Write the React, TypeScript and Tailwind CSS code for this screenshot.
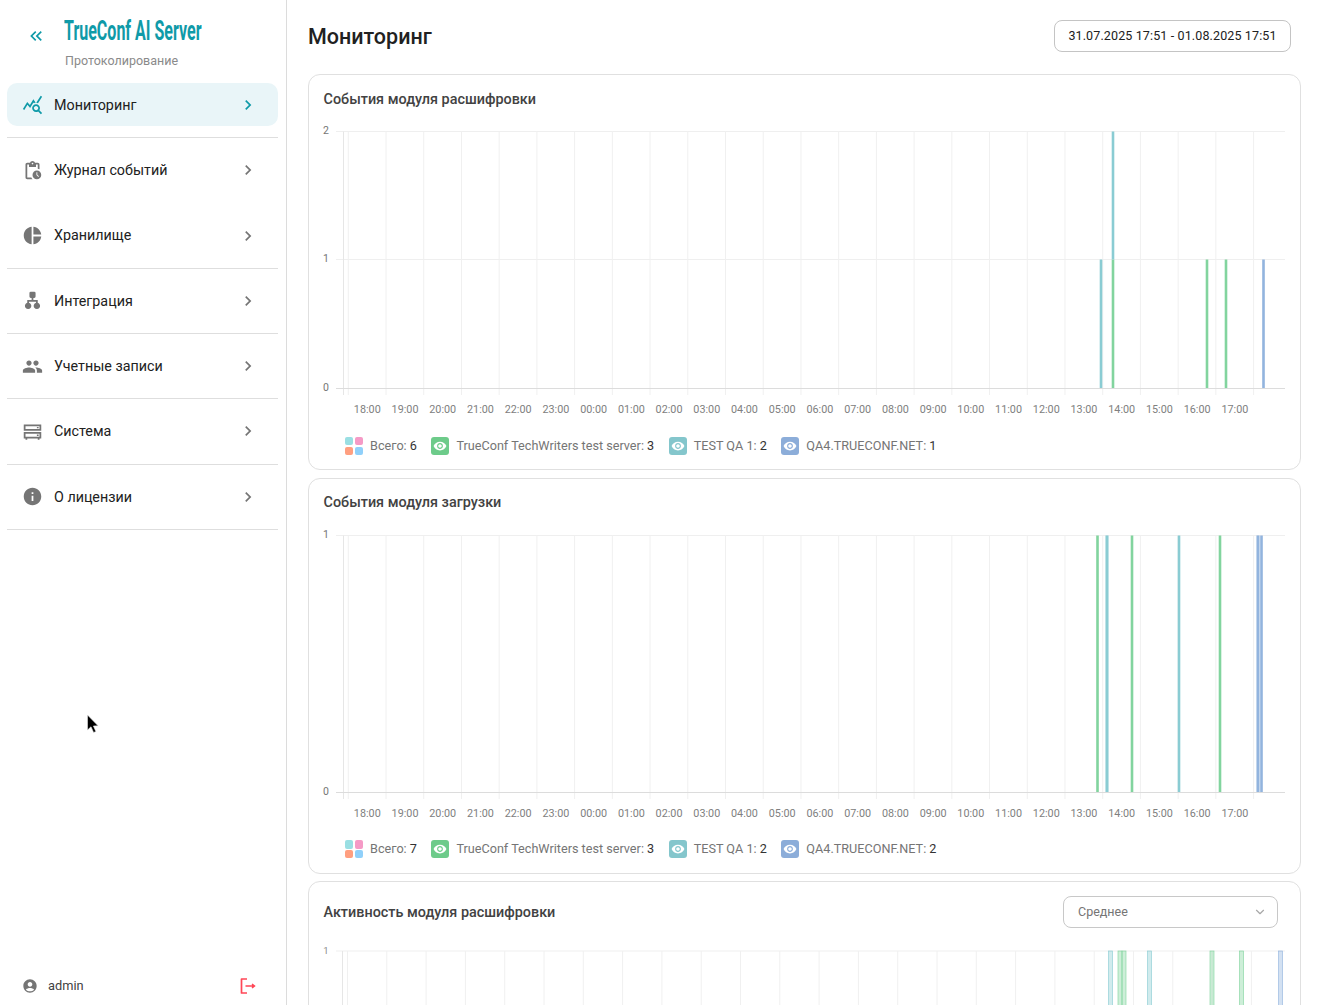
import { ChevronDown } from "lucide-react";

const ICONS = {
  monitor:
    "M19.88 18.47c.44-.7.7-1.51.7-2.39 0-2.49-2.01-4.5-4.5-4.5s-4.5 2.01-4.5 4.5 2.01 4.5 4.49 4.5c.88 0 1.7-.26 2.39-.7L21.58 23 23 21.58l-3.12-3.11zm-3.8.11c-1.38 0-2.5-1.12-2.5-2.5s1.12-2.5 2.5-2.5 2.5 1.12 2.5 2.5-1.12 2.5-2.5 2.5zm-.36-8.5c-.74.02-1.45.18-2.1.45l-.55-.83-3.8 6.18-3.01-3.52-3.63 5.81L1 17l5-8 3 3.5L13 6l2.72 4.08zm2.59.5c-.64-.28-1.33-.45-2.05-.49L21.38 2 23 3.18l-4.69 7.4z",
  journal:
    "M17 12c-2.76 0-5 2.24-5 5s2.24 5 5 5 5-2.24 5-5-2.24-5-5-5zm1.65 7.35L16.5 17.2V14h1v2.79l1.85 1.85-.7.71zM18 3h-3.18C14.4 1.84 13.3 1 12 1s-2.4.84-2.82 2H6c-1.1 0-2 .9-2 2v15c0 1.1.9 2 2 2h6.11c-.59-.57-1.07-1.25-1.42-2H6V5h2v3h8V5h2v5.08c.71.1 1.38.31 2 .6V5c0-1.1-.9-2-2-2zm-6 2c-.55 0-1-.45-1-1s.45-1 1-1 1 .45 1 1-.45 1-1 1z",
  storage:
    "M11 2v20c-5.07-.5-9-4.79-9-10s3.93-9.5 9-10zm2.03 0v8.99H22c-.47-4.74-4.24-8.52-8.97-8.99zm0 11.01V22c4.74-.47 8.5-4.25 8.97-8.99h-8.97z",
  integration:
    "M10 2h4a1.500 1.500 0 0 1 1.500 1.500v4A1.500 1.500 0 0 1 14 9h-1v2.500h5v3.200a3.600 3.600 0 1 1-2 0v-1.200H8v1.200a3.600 3.600 0 1 1-2 0v-3.200h5V9h-1a1.500 1.500 0 0 1-1.500-1.500v-4A1.500 1.500 0 0 1 10 2z",
  users:
    "M16 11c1.66 0 2.99-1.34 2.99-3S17.66 5 16 5c-1.66 0-3 1.34-3 3s1.34 3 3 3zm-8 0c1.66 0 2.99-1.34 2.99-3S9.66 5 8 5C6.34 5 5 6.34 5 8s1.34 3 3 3zm0 2c-2.33 0-7 1.17-7 3.5V19h14v-2.5c0-2.33-4.67-3.5-7-3.5zm8 0c-.29 0-.62.02-.97.05 1.16.84 1.97 1.97 1.97 3.45V19h6v-2.5c0-2.33-4.67-3.5-7-3.5z",
  system:
    "M2 4h20v7H2V4zm2 2v3h16V6H4zm13 .8h2v1.400h-2V6.800zM2 12.500h20V20h-2v1.500h-2V20H6v1.500H4V20H2v-7.500zm2 2V18h16v-3.500H4zm13 1h2V17h-2v-1.500z",
  info: "M12 2C6.48 2 2 6.48 2 12s4.48 10 10 10 10-4.48 10-10S17.52 2 12 2zm1 15h-2v-6h2v6zm0-8h-2V7h2v2z",
  account:
    "M12 2C6.48 2 2 6.48 2 12s4.48 10 10 10 10-4.48 10-10S17.52 2 12 2zm0 4c1.93 0 3.5 1.57 3.5 3.5S13.93 13 12 13s-3.5-1.57-3.5-3.5S10.07 6 12 6zm0 14c-2.03 0-4.43-.82-6.14-2.88C7.55 15.8 9.68 15 12 15s4.45.8 6.14 2.12C16.43 19.18 14.03 20 12 20z",
  eye: "M12 4.500C7 4.500 2.730 7.610 1 12c1.730 4.390 6 7.500 11 7.500s9.270-3.110 11-7.500c-1.730-4.390-6-7.500-11-7.500zM12 17c-2.760 0-5-2.240-5-5s2.240-5 5-5 5 2.240 5 5-2.240 5-5 5zm0-8c-1.660 0-3 1.340-3 3s1.340 3 3 3 3-1.340 3-3-1.340-3-3-3z",
};

const GREEN = "#82d49e";
const TEAL = "#8accd3";
const BLUE = "#92b4de";

const NAV = [
  { label: "Мониторинг", icon: ICONS.monitor, active: true },
  { label: "Журнал событий", icon: ICONS.journal, noLine: true },
  { label: "Хранилище", icon: ICONS.storage },
  { label: "Интеграция", icon: ICONS.integration },
  { label: "Учетные записи", icon: ICONS.users },
  { label: "Система", icon: ICONS.system },
  { label: "О лицензии", icon: ICONS.info },
];

const HOURS = Array.from({ length: 24 }, (_, i) => `${String((18 + i) % 24).padStart(2, "0")}:00`);

function Icon({ d, className }: { d: string; className: string }) {
  return (
    <svg viewBox="0 0 24 24" className={className} fill="currentColor">
      <path d={d} />
    </svg>
  );
}

function Sidebar() {
  return (
    <aside className="flex h-full w-[287px] shrink-0 flex-col border-r border-[#dcdcdc]">
      <div className="flex h-[72px] shrink-0 pl-[26px]">
        <svg viewBox="0 0 24 24" className="mt-[26px] h-[20px] w-[20px] text-[#0f9aa8]" fill="currentColor">
          <path d="M17.590 18 19 16.590 14.420 12 19 7.410 17.590 6l-6 6zM11 18l1.410-1.410L7.830 12l4.580-4.590L11 6l-6 6z" />
        </svg>
        <div className="ml-[18px] flex flex-col">
          <div className="mt-[16px] h-[30px] w-[138px] origin-left scale-x-[0.572] whitespace-nowrap text-[28px] leading-[30px] font-bold text-[#0f9aa8]">
            TrueConf AI Server
          </div>
          <div className="mt-[7px] pl-[1px] text-[12.500px] leading-[16px] whitespace-nowrap text-[#8a8a8a]">
            Протоколирование
          </div>
        </div>
      </div>
      <nav className="flex flex-col pt-[0.700px] pr-[8px] pl-[7px]">
        {NAV.map((item) => (
          <div
            key={item.label}
            className={`flex h-[65.33px] items-center border-b ${item.noLine ? "border-transparent" : "border-[#dedede]"}`}
          >
            <div
              className={`flex h-[43px] w-full items-center rounded-[10px] pr-[20px] pl-[15px] ${item.active ? "bg-[#e9f5f8]" : ""}`}
            >
              <Icon
                d={item.icon}
                className={`h-[21px] w-[21px] ${item.active ? "text-[#0f9aa8]" : "text-[#757575]"}`}
              />
              <span className="ml-[11px] flex-1 pt-[1px] text-[14.300px] text-[#212121]">{item.label}</span>
              <Icon
                d="M10 6 8.590 7.410 13.170 12l-4.580 4.590L10 18l6-6z"
                className={`h-[20px] w-[20px] ${item.active ? "text-[#0f9aa8]" : "text-[#757575]"}`}
              />
            </div>
          </div>
        ))}
      </nav>
      <div className="mt-auto flex h-[38px] items-center pr-[29px] pl-[22px]">
        <Icon d={ICONS.account} className="h-[16px] w-[16px] text-[#757575]" />
        <span className="ml-[10px] flex-1 text-[12.800px] text-[#424242]">admin</span>
        <svg viewBox="0 0 18 18" className="h-[18px] w-[18px]" fill="none" stroke="#ff4757" strokeWidth="1.700">
          <path d="M8 2H2.500v14H8" strokeLinejoin="round" />
          <path d="M6.500 9H15M13 7l2.500 2-2.500 2" fill="#ff4757" strokeWidth="1.500" />
        </svg>
      </div>
    </aside>
  );
}

type Bar = { x: number; y1: number; y2: number; color: string; w?: number; halo?: boolean };

function Chart({ yLabels, bars }: { yLabels: { t: string; y: number; line: number }[]; bars: Bar[] }) {
  const ticks = HOURS.concat("").map((_, i) => 348.300 + i * 37.72);
  return (
    <svg viewBox="309 0 991 300" className="block h-[300px] w-full">
      {yLabels.map((l) => (
        <text key={l.t} x={326} y={l.y + 4} textAnchor="middle" fontSize="10.500" fill="#757575">
          {l.t}
        </text>
      ))}
      {yLabels.slice(0, -1).map((l) => (
        <line key={l.t} x1={336} x2={1285} y1={l.line} y2={l.line} stroke="#efefef" />
      ))}
      <line x1={343.500} x2={343.500} y1={6.500} y2={270} stroke="#e6e6e6" />
      {ticks.map((x) => (
        <line key={x} x1={x} x2={x} y1={6.500} y2={270} stroke="#f0f0f0" />
      ))}
      <line x1={336} x2={1285} y1={263.500} y2={263.500} stroke="#dcdcdc" />
      {bars.map((b, i) => (
        <g key={i}>
          {b.halo && <rect x={b.x - 2} y={b.y1} width={4} height={b.y2 - b.y1} fill={b.color} opacity={0.35} />}
          <rect x={b.x - (b.w ?? 2.600) / 2} y={b.y1} width={b.w ?? 2.600} height={b.y2 - b.y1} fill={b.color} />
        </g>
      ))}
      {HOURS.map((h, i) => (
        <text key={h} x={367.300 + i * 37.72} y={288} textAnchor="middle" fontSize="10.800" fill="#808080">
          {h}
        </text>
      ))}
    </svg>
  );
}

function ActivityChart() {
  const ticks = Array.from({ length: 24 }, (_, i) => 347.500 + i * 39.3);
  const bars = [
    { x: 1110.500, c: TEAL },
    { x: 1120, c: GREEN },
    { x: 1124, c: GREEN },
    { x: 1149.500, c: TEAL },
    { x: 1212, c: GREEN },
    { x: 1241.500, c: GREEN },
    { x: 1280.500, c: BLUE },
  ];
  return (
    <svg viewBox="309 0 991 300" className="block h-[300px] w-full">
      <text x={326} y={9.500} textAnchor="middle" fontSize="9.500" fill="#8a8a8a">
        1
      </text>
      <line x1={336} x2={1285} y1={7} y2={7} stroke="#efefef" />
      <line x1={342.500} x2={342.500} y1={7} y2={270} stroke="#e6e6e6" />
      {ticks.map((x) => (
        <line key={x} x1={x} x2={x} y1={7} y2={270} stroke="#f0f0f0" />
      ))}
      {bars.map((b) => (
        <rect
          key={b.x}
          x={b.x - 2}
          y={7}
          width={4}
          height={263}
          fill={b.c}
          fillOpacity={0.4}
          stroke={b.c}
          strokeOpacity={0.9}
          strokeWidth={0.700}
        />
      ))}
    </svg>
  );
}

function LegendEye({ color }: { color: string }) {
  return (
    <span className={`flex h-[18px] w-[18px] items-center justify-center rounded-[3px] ${color}`}>
      <Icon d={ICONS.eye} className="h-[14px] w-[14px] text-white" />
    </span>
  );
}

function LegendItem({ icon, label, value }: { icon: React.ReactNode; label: string; value: number }) {
  return (
    <div className="flex items-center gap-[7px] text-[12.650px] whitespace-nowrap text-[#757575]">
      {icon}
      <span>
        {label}: <span className="text-[#333333]">{value}</span>
      </span>
    </div>
  );
}

function AllIcon() {
  return (
    <span className="grid h-[18px] w-[18px] grid-cols-2 gap-[1.500px]">
      <span className="rounded-[2px] bg-[#9adfe3]" />
      <span className="rounded-[2px] bg-[#f59ac6]" />
      <span className="rounded-[2px] bg-[#ff9f80]" />
      <span className="rounded-[2px] bg-[#90d0fa]" />
    </span>
  );
}

function Legend({ values }: { values: number[] }) {
  return (
    <div className="flex h-[44px] items-center gap-[14.500px] pb-[2px] pl-[36px]">
      <LegendItem icon={<AllIcon />} label="Всего" value={values[0]} />
      <LegendItem icon={<LegendEye color="bg-[#6dcb8a]" />} label="TrueConf TechWriters test server" value={values[1]} />
      <LegendItem icon={<LegendEye color="bg-[#84c6cc]" />} label="TEST QA 1" value={values[2]} />
      <LegendItem icon={<LegendEye color="bg-[#8cadd9]" />} label="QA4.TRUECONF.NET" value={values[3]} />
    </div>
  );
}

function Card({ title, children }: { title: string; children: React.ReactNode }) {
  return (
    <section className="h-[396px] shrink-0 rounded-[12px] border border-[#e0e0e0] bg-white">
      <h2 className="flex h-[49px] items-center pl-[14.500px] text-[14.400px] font-medium text-[#424242]">{title}</h2>
      <div className="pt-[1px]">{children}</div>
    </section>
  );
}

export default function App() {
  return (
    <div className="relative flex h-screen overflow-hidden bg-white font-['Roboto',sans-serif]">
      <Sidebar />
      <main className="flex min-w-0 flex-1 flex-col pr-[17px] pl-[21px]">
        <header className="flex h-[74px] shrink-0 items-center justify-between pr-[10px]">
          <h1 className="text-[21.500px] font-medium text-[#212121]">Мониторинг</h1>
          <div className="mb-[2px] flex h-[32px] w-[237px] items-center justify-center rounded-[8px] border border-[#c4c4c4] text-[12.500px] tracking-[0.13px] text-[#212121]">
            31.07.2025 17:51 - 01.08.2025 17:51
          </div>
        </header>
        <div className="flex flex-col gap-[7.500px]">
          <Card title="События модуля расшифровки">
            <Chart
              yLabels={[
                { t: "2", y: 5, line: 6.500 },
                { t: "1", y: 133, line: 134.500 },
                { t: "0", y: 262, line: 263.500 },
              ]}
              bars={[
                { x: 1101, y1: 134.500, y2: 263, color: TEAL },
                { x: 1113, y1: 134.500, y2: 263, color: GREEN },
                { x: 1113, y1: 6.500, y2: 134.500, color: TEAL },
                { x: 1207, y1: 134.500, y2: 263, color: GREEN },
                { x: 1226, y1: 134.500, y2: 263, color: GREEN },
                { x: 1263.500, y1: 134.500, y2: 263, color: BLUE },
              ]}
            />
            <Legend values={[6, 3, 2, 1]} />
          </Card>
          <Card title="События модуля загрузки">
            <Chart
              yLabels={[
                { t: "1", y: 5, line: 6.500 },
                { t: "0", y: 262, line: 263.500 },
              ]}
              bars={[
                { x: 1097.500, y1: 6.500, y2: 263, color: GREEN, w: 2.600 },
                { x: 1107, y1: 6.500, y2: 263, color: TEAL, halo: true },
                { x: 1132, y1: 6.500, y2: 263, color: GREEN },
                { x: 1179, y1: 6.500, y2: 263, color: TEAL },
                { x: 1220, y1: 6.500, y2: 263, color: GREEN },
                { x: 1258, y1: 6.500, y2: 263, color: BLUE, halo: true },
                { x: 1261.500, y1: 6.500, y2: 263, color: BLUE },
              ]}
            />
            <Legend values={[7, 3, 2, 2]} />
          </Card>
          <section className="h-[396px] shrink-0 rounded-[12px] border border-[#e0e0e0] bg-white">
            <div className="flex h-[62px] items-center justify-between pr-[22px] pl-[14.500px]">
              <h2 className="text-[14.400px] font-medium text-[#424242]">Активность модуля расшифровки</h2>
              <div className="-mt-[2px] flex h-[32px] w-[215px] items-center justify-between rounded-[8px] border border-[#c8c8c8] pr-[10px] pl-[14px] text-[12.500px] text-[#757575]">
                Среднее
                <ChevronDown className="h-[14px] w-[14px] text-[#a8a8a8]" />
              </div>
            </div>
            <ActivityChart />
          </section>
        </div>
      </main>
      {/* mouse pointer caught in the capture */}
      <svg viewBox="0 0 14 20" className="absolute top-[713px] left-[86px] h-[22px] w-[14px]">
        <path d="M1.500 1v15l3.500-3.200 2.600 5.700 2.300-1-2.500-5.500 4.700-.2z" fill="#000" stroke="#e6e6e6" strokeWidth="0.600" />
      </svg>
    </div>
  );
}
